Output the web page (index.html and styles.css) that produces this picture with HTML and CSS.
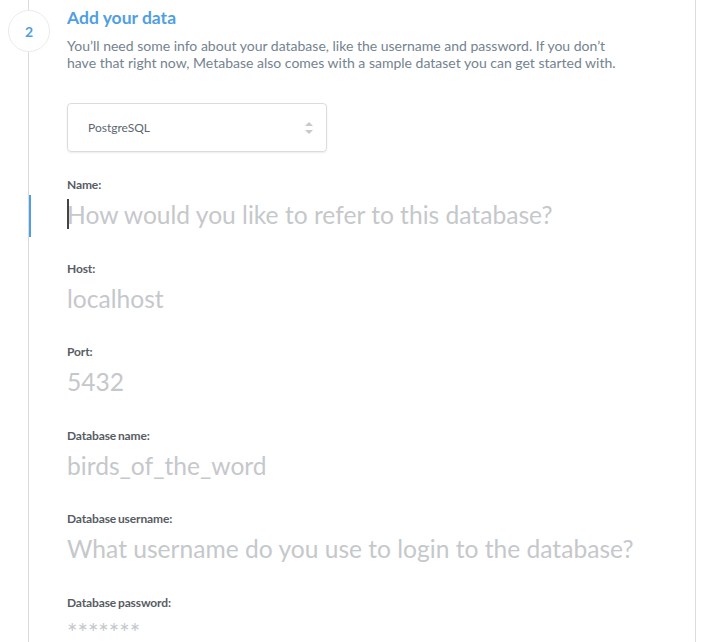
FILE: index.html
```html
<!DOCTYPE html>
<html lang="en">
<head>
<meta charset="utf-8">
<title>Add your data</title>
<link rel="stylesheet" href="styles.css">
</head>
<body>
<div class="step">
  <header class="step-header">
    <div class="step-num">2</div>
    <div class="step-intro">
      <h2 class="step-title">Add your data</h2>
      <p class="step-desc">You’ll need some info about your database, like the username and password. If you don’t have that right now, Metabase also comes with a sample dataset you can get started with.</p>
    </div>
  </header>
  <form class="db-form">
    <div class="select">
      <span class="select-value">PostgreSQL</span>
      <svg class="select-arrows" width="8" height="12" viewBox="0 0 8 12"><path d="M4 0 L8 4 L0 4 Z M0 8 L8 8 L4 12 Z" fill="#c8c8c8"/></svg>
    </div>
    <div class="field">
      <label class="field-label">Name:</label>
      <div class="input-row active"><span class="caret"></span><input class="field-input" type="text" placeholder="How would you like to refer to this database?"></div>
    </div>
    <div class="field">
      <label class="field-label">Host:</label>
      <div class="input-row"><input class="field-input" type="text" placeholder="localhost"></div>
    </div>
    <div class="field">
      <label class="field-label">Port:</label>
      <div class="input-row"><input class="field-input" type="text" placeholder="5432"></div>
    </div>
    <div class="field">
      <label class="field-label">Database name:</label>
      <div class="input-row"><input class="field-input" type="text" placeholder="birds_of_the_word"></div>
    </div>
    <div class="field">
      <label class="field-label">Database username:</label>
      <div class="input-row"><input class="field-input" type="text" placeholder="What username do you use to login to the database?"></div>
    </div>
    <div class="field">
      <label class="field-label">Database password:</label>
      <div class="input-row"><input class="field-input" type="password" placeholder="*******"></div>
    </div>
  </form>
</div>
</body>
</html>
```
FILE: styles.css
```css
* { box-sizing: border-box; }
html, body { margin: 0; padding: 0; background: #fff; }
body {
  font-family: Lato, "Noto Sans", sans-serif;
  height: 642px;
  overflow: hidden;
}
.step {
  width: 696px;
  height: 642px;
  overflow: hidden;
  border-right: 1px solid #dcdcdc;
  background: linear-gradient(#dcdcdc, #dcdcdc) no-repeat 28px 0 / 1px 100%;
}
.step-header {
  display: flex;
  align-items: flex-start;
  gap: 17px;
  padding-left: 8px;
}
.step-num {
  flex: none;
  width: 42px;
  height: 42px;
  margin-top: 10px;
  border: 1px solid #ebebeb;
  border-radius: 50%;
  background: #fff;
  color: #509ee3;
  font-weight: 700;
  font-size: 14px;
  display: flex;
  align-items: center;
  justify-content: center;
}
.step-intro { width: 570px; }
.step-title {
  margin: 7px 0 0;
  font-size: 17.5px;
  line-height: 22px;
  font-weight: 700;
  color: #509ee3;
}
.step-desc {
  margin: 8px 0 0;
  font-size: 14px;
  line-height: 17px;
  color: #74838f;
}
.db-form {
  padding-left: 29px;
  padding-top: 32px;
}
.select {
  margin-left: 38px;
  width: 260px;
  height: 49px;
  border: 1px solid #dcdcdc;
  border-radius: 4px;
  box-shadow: 0 1px 2px rgba(0,0,0,0.08);
  display: flex;
  align-items: center;
  justify-content: space-between;
  padding: 0 13px 0 20px;
  margin-bottom: 25px;
}
.select-value {
  font-size: 12px;
  color: #5d6670;
}
.select-arrows { display: block; }
.field { margin-bottom: 23.6px; }
.field-label {
  display: block;
  margin-left: 38px;
  font-size: 12px;
  line-height: 15px;
  font-weight: 700;
  color: #575c63;
  letter-spacing: -0.01em;
  word-spacing: -1px;
  margin-bottom: 3px;
}
.input-row {
  position: relative;
  padding: 5px 0 8px 38px;
  height: 42px;
}
.input-row.active {
  border-left: 2px solid #509ee3;
  padding-left: 36px;
}
.caret {
  position: absolute;
  left: 36px;
  top: 4px;
  width: 2px;
  height: 30px;
  background: #444;
}
.field-input {
  display: block;
  width: 620px;
  height: 29px;
  padding: 0;
  margin: 0;
  border: 0;
  outline: none;
  background: transparent;
  font-family: Lato, "Noto Sans", sans-serif;
  font-size: 24.6px;
  color: #444;
  caret-color: transparent;
}
.field-input::placeholder { color: #c5c8cb; opacity: 1; }
```
